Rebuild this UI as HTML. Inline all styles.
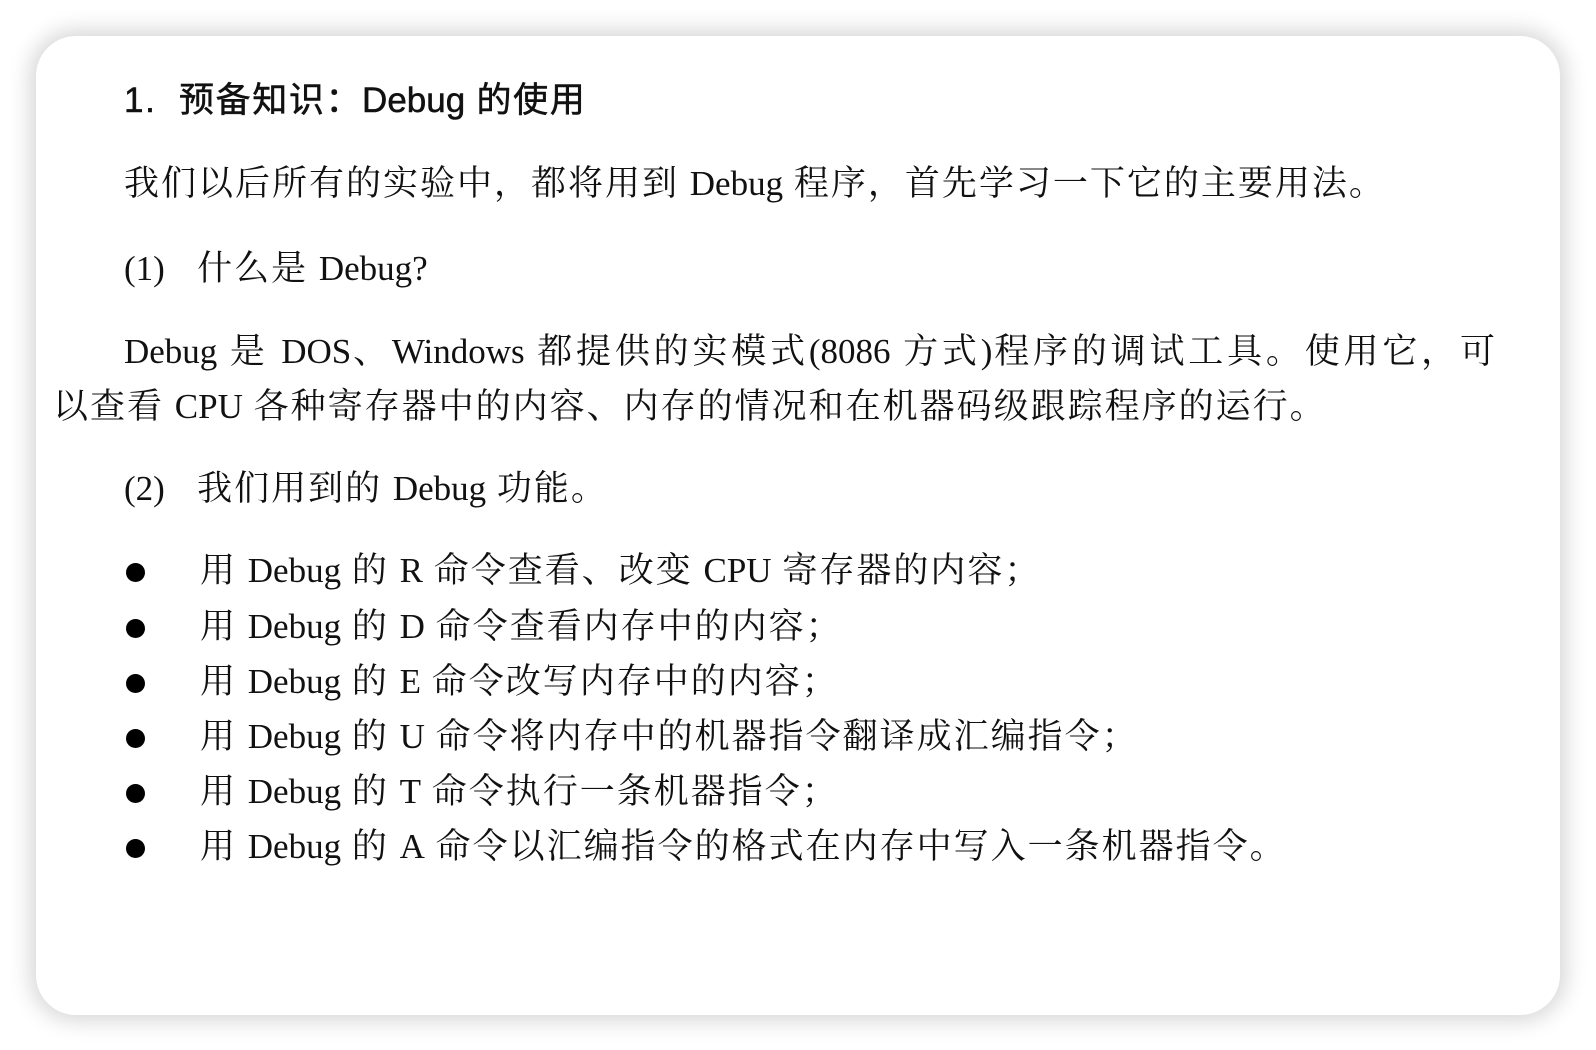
<!DOCTYPE html>
<html><head><meta charset="utf-8"><style>
html,body{margin:0;padding:0;width:1596px;height:1050px;background:#fff;overflow:hidden}
.card{position:absolute;left:36px;top:36px;width:1524px;height:979px;background:#fff;border-radius:40px;box-shadow:0 0 22px 6px rgba(0,0,0,0.16)}
.t{position:absolute;white-space:nowrap;font-family:"Liberation Serif","Noto Serif CJK SC",serif;font-size:35px;line-height:54px;color:#111;letter-spacing:2px}
.h{font-family:"Liberation Sans","Noto Sans CJK SC",sans-serif;font-size:35px;color:#111;font-weight:normal;letter-spacing:1.6px;-webkit-text-stroke:0.5px #111}
.p{position:absolute;left:53px;width:1444px;font-family:"Liberation Serif","Noto Serif CJK SC",serif;font-size:35px;line-height:55px;color:#111;letter-spacing:2px}
.j{text-align:justify;text-align-last:justify;padding-left:71px;white-space:nowrap}
.dot{position:absolute;left:126px;width:19px;height:19px;border-radius:50%;background:#000}
i{font-style:normal;letter-spacing:0}
</style></head><body>
<div class="card"></div>
<div class="t h" style="left:124px;top:74px">1.&nbsp; 预备知识：<i>Debug</i> 的使用</div>
<div class="t" style="left:124px;top:157px">我们以后所有的实验中，都将用到 <i>Debug</i> 程序，首先学习一下它的主要用法。</div>
<div class="t" style="left:124px;top:242px"><i>(1)</i>&nbsp;&nbsp; 什么是 <i>Debug?</i></div>
<div class="p" style="top:324px"><div class="j"><i>Debug</i> 是 <i>DOS</i>、<i>Windows</i> 都提供的实模式<i>(8086</i> 方式<i>)</i>程序的调试工具。使用它，可</div><div style="white-space:nowrap">以查看 <i>CPU</i> 各种寄存器中的内容、内存的情况和在机器码级跟踪程序的运行。</div></div>
<div class="t" style="left:124px;top:462px"><i>(2)</i>&nbsp;&nbsp; 我们用到的 <i>Debug</i> 功能。</div>
<div class="dot" style="top:563px"></div><div class="t" style="left:200px;top:544px">用 <i>Debug</i> 的 <i>R</i> 命令查看、改变 <i>CPU</i> 寄存器的内容；</div>
<div class="dot" style="top:619px"></div><div class="t" style="left:200px;top:600px">用 <i>Debug</i> 的 <i>D</i> 命令查看内存中的内容；</div>
<div class="dot" style="top:674px"></div><div class="t" style="left:200px;top:655px">用 <i>Debug</i> 的 <i>E</i> 命令改写内存中的内容；</div>
<div class="dot" style="top:729px"></div><div class="t" style="left:200px;top:710px">用 <i>Debug</i> 的 <i>U</i> 命令将内存中的机器指令翻译成汇编指令；</div>
<div class="dot" style="top:784px"></div><div class="t" style="left:200px;top:765px">用 <i>Debug</i> 的 <i>T</i> 命令执行一条机器指令；</div>
<div class="dot" style="top:839px"></div><div class="t" style="left:200px;top:820px">用 <i>Debug</i> 的 <i>A</i> 命令以汇编指令的格式在内存中写入一条机器指令。</div>
</body></html>
